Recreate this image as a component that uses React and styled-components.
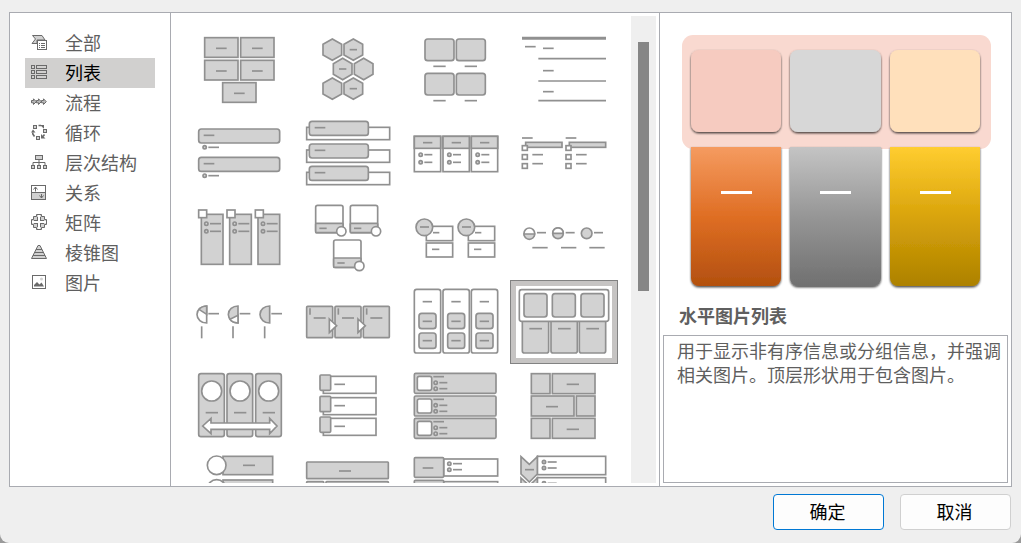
import React, { useState } from "react";
import styled, { createGlobalStyle } from "styled-components";

const GlobalStyle = createGlobalStyle`
  * { box-sizing: border-box; }
  body {
    margin: 0;
    background: #9a9a9a;
    font-family: "Noto Sans CJK SC", sans-serif;
    font-size: 18px;
    line-height: 24px;
    color: #5f5f5f;
  }
  button { font: inherit; color: inherit; }
`;

const Dialog = styled.div`
  display: flex;
  flex-direction: column;
  height: 100vh;
  padding: 12px 9px 13px;
  background: #efefef;
  border-radius: 0 0 9px 9px;
`;

const Panels = styled.main`
  display: flex;
  flex: 1;
  min-height: 0;
  background: #fff;
  border: 1px solid #a9abb1;
`;

const Categories = styled.nav`
  flex: none;
  width: 161px;
  padding: 15px;
  border-right: 1px solid #a9abb1;
`;

const Category = styled.button`
  display: flex;
  align-items: center;
  gap: 18px;
  width: 130px;
  height: 30px;
  padding: 0 6px 2px;
  border: 0;
  text-align: left;
  white-space: nowrap;
  background: ${(p) => (p.$active ? "#d1d0cf" : "transparent")};
  color: ${(p) => (p.$active ? "#000" : "#5f5f5f")};
`;

const CategoryIcon = styled.svg`
  flex: none;
  width: 16px;
  height: 18px;
  fill: none;
  stroke: #6a6a6a;
  stroke-width: 1;
`;

const Gallery = styled.section`
  display: flex;
  flex: 1;
  min-width: 0;
  padding: 3px;
  border-right: 1px solid #a9abb1;
`;

const Layouts = styled.div`
  flex: 1;
  display: grid;
  grid-template-columns: repeat(auto-fill, 108px);
  grid-auto-rows: 84px;
  align-content: start;
  padding: 12px 0 0 12px;
  overflow-y: auto;
  scrollbar-width: none;
`;

const LayoutButton = styled.button`
  display: block;
  padding: 5px;
  border: 1px solid ${(p) => (p.$active ? "#828282" : "transparent")};
  background: ${(p) => (p.$active ? "#c6c4c3" : "transparent")};
`;

const Picture = styled.svg`
  display: block;
  width: 96px;
  height: 72px;
  background: #fff;
  fill: #d2d2d2;
  stroke: #909090;
  stroke-width: 5;
`;

const Track = styled.div`
  flex: none;
  width: 25px;
  padding: 26px 7px;
  background: #efefef;
`;

const Thumb = styled.div`
  width: 11px;
  height: 60%;
  background: #868686;
`;

const Details = styled.section`
  display: flex;
  flex-direction: column;
  flex: none;
  width: 351px;
  padding: 3px;
`;

const Preview = styled.svg`
  flex: none;
  width: 312px;
  height: 256px;
  margin: 19px 0 0 19px;
`;

const Title = styled.h2`
  margin: 12px 16px 8px;
  font-size: 18px;
  line-height: 24px;
  font-weight: 700;
`;

const Description = styled.p`
  flex: 1;
  margin: 0;
  padding: 2px 4px 2px 13px;
  border: 1px solid #a9abb1;
`;

const Footer = styled.footer`
  display: flex;
  justify-content: flex-end;
  gap: 16px;
  padding: 7px 1px 0;
`;

const Action = styled.button`
  width: 111px;
  height: 36px;
  padding: 0 2px 2px 0;
  border: 1px solid ${(p) => (p.$primary ? "#0078d4" : "#d0d0d0")};
  border-radius: 4px;
  background: #fdfdfd;
  color: #000;
`;

/* Category icons, on a 16 unit grid */

const icons = {
  all: (
    <>
      <path d="M1.5 1.5H11L14 6H6V9.5H1L4.5 5Z" fill="#d1d1d1" />
      <rect x="6.5" y="6.5" width="9" height="9" fill="#fff" />
      <path d="M8 9.5h1M10 9.5h4M8 11.5h1M10 11.5h4M8 13.5h1M10 13.5h4" />
    </>
  ),
  list: (
    <>
      {[1, 6, 11].map((y) => (
        <g key={y}>
          <rect x="0.5" y={y + 0.5} width="3" height="3" />
          <rect x="5.5" y={y + 0.5} width="10" height="3" />
        </g>
      ))}
    </>
  ),
  process: (
    <>
      {[0, 5, 10].map((x) => (
        <path key={x} fill="#bbb" d={`M${x + 0.5} 6.5H${x + 2.5}V4.8L${x + 5.3} 7.7L${x + 2.5} 10.5V8.8H${x + 0.5}Z`} />
      ))}
    </>
  ),
  cycle: (
    <>
      <g fill="#d1d1d1">
        <rect x="2.5" y="1.5" width="3" height="3" />
        <rect x="12.5" y="5.5" width="3" height="3" />
        <rect x="5.5" y="12.5" width="3" height="3" />
      </g>
      <path d="M7.5 1.5H10M1.8 8.5V10L3.5 12.5M13.5 10.5L12 12.5" strokeWidth="1.6" />
      <path d="M0 8.5L2 5.5L4.5 8.5ZM9 1L13 1V4.8ZM10 10L14.5 14.5H10Z" fill="#6a6a6a" stroke="none" />
    </>
  ),
  hierarchy: (
    <>
      <path d="M8 6V11M2 11V8.5H14V11" />
      <g fill="#d1d1d1">
        <rect x="4.5" y="1.5" width="7" height="4" />
        <rect x="0.5" y="11.5" width="3" height="3" />
        <rect x="6.5" y="11.5" width="3" height="3" />
        <rect x="12.5" y="11.5" width="3" height="3" />
      </g>
    </>
  ),
  relation: (
    <>
      <rect x="0.5" y="8.5" width="14" height="7" fill="#d1d1d1" />
      <rect x="0.5" y="1.5" width="14" height="14" />
      <path d="M4.5 7.5V3M2.5 5.5L4.5 3L6.5 5.5M10.5 10V14M8.5 11.5L10.5 14L12.5 11.5" />
    </>
  ),
  matrix: (
    <>
      <path
        d="M5.5 0.5H10.5V2.5H13.5V5.5H15.5V10.5H13.5V13.5H10.5V15.5H5.5V13.5H2.5V10.5H0.5V5.5H2.5V2.5H5.5Z"
        fill="#d1d1d1"
      />
      <path d="M8 3V13M3 8H13" strokeWidth="4" />
      <path d="M8 1V15M1 8H15" stroke="#fff" strokeWidth="2" />
    </>
  ),
  pyramid: (
    <>
      <path d="M7 1.5H9L15.5 14.5H0.5Z" fill="#d1d1d1" />
      <path d="M5 5.5H11M4 8.5H12M2 11.5H14" />
    </>
  ),
  picture: (
    <>
      <rect x="1.5" y="1.5" width="13" height="13" />
      <path d="M3 12.5V11L6 8L8.5 10.5L10.5 8.5L13 12.5Z" fill="#6a6a6a" stroke="none" />
      <circle cx="10.5" cy="5" r="1.5" fill="#d1d1d1" stroke="none" />
    </>
  ),
};

const categories = [
  ["all", "全部"],
  ["list", "列表"],
  ["process", "流程"],
  ["cycle", "循环"],
  ["hierarchy", "层次结构"],
  ["relation", "关系"],
  ["matrix", "矩阵"],
  ["pyramid", "棱锥图"],
  ["picture", "图片"],
];

/* Parts of the layout drawings, on a 288 x 216 unit sheet */

const Box = ({ b: [x1, y1, x2, y2], r = 0, white }) => (
  <rect x={x1} y={y1} width={x2 - x1} height={y2 - y1} rx={r} fill={white ? "#fff" : undefined} />
);
const Dash = ({ x, y, w = 32 }) => <path d={`M${x} ${y}h${w}`} />;
const Ring = ({ x, y, r = 5, white }) => <circle cx={x} cy={y} r={r} fill={white ? "#fff" : undefined} />;
const Bullet = ({ x, y, w = 24 }) => (
  <>
    <Ring x={x} y={y} />
    <Dash x={x + 11} y={y} w={w} />
  </>
);
const Hexagon = ({ x, y, dash }) => (
  <>
    <path d={`M${x} ${y - 32}l28 16v32l-28 16l-28 -16v-32Z`} />
    {dash && <Dash x={x - 11} y={y} w={22} />}
  </>
);

const layouts = [
  {
    name: "基本列表", at: [36, 42],
    art: (
      <>
        {[[74, 53], [182, 53], [74, 121], [182, 121], [128, 188]].map(([x, y]) => (
          <g key={`${x}-${y}`}>
            <Box b={[x, y, x + 100, y + 59]} />
            <Dash x={x + 34} y={y + 32} />
          </g>
        ))}
      </>
    ),
  },
  {
    name: "交替六边形", at: [360, 42],
    art: (
      <>
        <Hexagon x={457} y={89} />
        <Hexagon x={520} y={89} dash />
        <Hexagon x={488} y={147} dash />
        <Hexagon x={551} y={147} />
        <Hexagon x={457} y={206} />
        <Hexagon x={520} y={206} dash />
      </>
    ),
  },
  {
    name: "图片题注列表", at: [24, 42],
    art: (
      <>
        {[[75, 57], [169, 57], [75, 160], [169, 160]].map(([x, y]) => (
          <g key={`${x}-${y}`}>
            <Box b={[x, y, x + 87, y + 65]} r={8} />
            <Dash x={x + 25} y={y + 82} w={37} />
          </g>
        ))}
      </>
    ),
  },
  {
    name: "线型列表", at: [348, 42],
    art: (
      <>
        <path d="M366 55H618" strokeWidth="9" />
        <Dash x={375} y={80} />
        {[[85, 116], [152, 183], [215, 242]].map(([y, line]) => (
          <g key={y}>
            <Dash x={429} y={y} />
            <Dash x={415} y={line} w={203} />
          </g>
        ))}
      </>
    ),
  },
  {
    name: "垂直项目符号列表", at: [36, 294],
    art: (
      <>
        {[327, 412].map((y) => (
          <g key={y}>
            <Box b={[56, y, 299, y + 42]} r={8} />
            <Dash x={71} y={y + 19} />
            <Bullet x={74} y={y + 55} w={32} />
          </g>
        ))}
      </>
    ),
  },
  {
    name: "垂直框列表", at: [360, 294],
    art: (
      <>
        {[304, 372, 439].map((y) => (
          <g key={y}>
            <Box b={[380, y + 18, 629, y + 55]} white />
            <Box b={[388, y, 565, y + 42]} r={8} />
            <Dash x={404} y={y + 19} />
          </g>
        ))}
      </>
    ),
  },
  {
    name: "水平项目符号列表", at: [24, 294],
    art: (
      <>
        {[43, 129, 214].map((x) => (
          <g key={x}>
            <Box b={[x, 349, x + 79, 455]} white />
            <Box b={[x, 349, x + 79, 385]} />
            <Dash x={x + 26} y={368} w={28} />
            <Bullet x={x + 19} y={404} />
            <Bullet x={x + 19} y={427} />
          </g>
        ))}
      </>
    ),
  },
  {
    name: "方形重点列表", at: [348, 294],
    art: (
      <>
        {[367, 498].map((x) => (
          <g key={x}>
            <Dash x={x - 1} y={354} />
            <Box b={[x + 10, 367, x + 119, 382]} />
            <Box b={[x, 377, x + 15, 391]} white />
            <Box b={[x, 404, x + 15, 418]} white />
            <Box b={[x, 431, x + 15, 445]} white />
            <Dash x={x + 30} y={404} />
            <Dash x={x + 30} y={431} />
          </g>
        ))}
      </>
    ),
  },
  {
    name: "图片重点列表", at: [36, 36],
    art: (
      <>
        {[56, 141, 226].map((x) => (
          <g key={x}>
            <Box b={[x + 8, 73, x + 73, 223]} />
            <Box b={[x, 60, x + 24, 83]} white />
            <Bullet x={x + 23} y={101} w={33} />
            <Bullet x={x + 23} y={124} w={33} />
          </g>
        ))}
      </>
    ),
  },
  {
    name: "蛇形图片题注", at: [360, 36],
    art: (
      <>
        {[[407, 46], [511, 46], [461, 150]].map(([x, y]) => (
          <g key={x}>
            <Box b={[x, y, x + 82, y + 82]} r={6} white />
            <Box b={[x, y + 54, x + 82, y + 82]} r={2} />
            <Dash x={x + 11} y={y + 69} w={22} />
            <Ring x={x + 77} y={y + 78} r={14} white />
          </g>
        ))}
      </>
    ),
  },
  {
    name: "堆叠列表", at: [24, 36],
    art: (
      <>
        {[47, 173].map((x) => (
          <g key={x}>
            <Box b={[x + 32, 109, x + 111, 152]} white />
            <Box b={[x + 32, 159, x + 111, 201]} white />
            <Ring x={x + 26} y={112} r={25} />
            <Dash x={x + 13} y={111} w={27} />
            <Dash x={x + 52} y={128} w={19} />
            <Dash x={x + 49} y={178} w={22} />
          </g>
        ))}
      </>
    ),
  },
  {
    name: "递增圆形流程", at: [348, 36],
    art: (
      <>
        <Ring x={388} y={130} r={16} white />
        <path d="M372 132H404A16 16 0 0 1 372 132Z" />
        <Ring x={474} y={130} r={16} />
        <path d="M459 130V124A16 16 0 0 1 489 124V130Z" fill="#fff" />
        <Ring x={560} y={130} r={16} />
        {[388, 474, 559].map((x) => (
          <g key={x}>
            <Dash x={x + 23} y={128} w={27} />
            <Dash x={x + 9} y={173} w={46} />
          </g>
        ))}
      </>
    ),
  },
  {
    name: "饼图流程", at: [36, 288],
    art: (
      <>
        <path d="M80 348V399A29 25.5 0 0 1 80 348Z" fill="#fff" />
        <path d="M80 348V373L57 358Q66 348 80 348Z" />
        <path d="M174 348V399A29 25.5 0 0 1 174 348Z" />
        <path d="M174 376V399Q158 399 150 388Z" fill="#fff" />
        <path d="M269 348V399A29 25.5 0 0 1 269 348Z" />
        {[65, 159, 254].map((x) => (
          <g key={x}>
            <path d={`M${x} 409V445`} />
            <Dash x={x + 20} y={371} />
          </g>
        ))}
      </>
    ),
  },
  {
    name: "详细流程", at: [360, 288],
    art: (
      <>
        {[380, 465, 550].map((x) => (
          <g key={x}>
            <Box b={[x, 349, x + 78, 443]} r={3} />
            <path d={`M${x + 10} 355V374`} />
            <Dash x={x + 21} y={384} w={36} />
          </g>
        ))}
        <path d="M448 387L470 407L448 428ZM534 387L556 407L534 428Z" fill="#fff" />
      </>
    ),
  },
  {
    name: "分组列表", at: [24, 288],
    art: (
      <>
        {[43, 129, 214].map((x) => (
          <g key={x}>
            <Box b={[x, 298, x + 79, 489]} r={7} white />
            <Dash x={x + 25} y={335} w={28} />
            <Box b={[x + 14, 370, x + 65, 416]} r={8} />
            <Dash x={x + 25} y={394} w={28} />
            <Box b={[x + 14, 429, x + 65, 475]} r={8} />
            <Dash x={x + 25} y={452} w={28} />
          </g>
        ))}
      </>
    ),
  },
  {
    name: "水平图片列表", at: [348, 288],
    art: (
      <>
        {[367, 453, 538].map((x) => (
          <g key={x}>
            <Box b={[x, 380, x + 79, 489]} r={6} />
            <Dash x={x + 21} y={416} w={38} />
          </g>
        ))}
        <Box b={[358, 299, 626, 394]} r={7} white />
        {[372, 457, 543].map((x) => (
          <Box key={x} b={[x, 311, x + 69, 381]} r={8} />
        ))}
      </>
    ),
  },
  {
    name: "连续图片列表", at: [36, 30],
    art: (
      <>
        {[56, 141, 227].map((x) => (
          <g key={x}>
            <Box b={[x, 41, x + 77, 230]} r={7} />
            <Ring x={x + 39} y={93} r={30} white />
            <Dash x={x + 21} y={158} w={37} />
          </g>
        ))}
        <path d="M68 198L93 175V189H269V175L291 198L269 221V208H93V221Z" fill="#fff" />
      </>
    ),
  },
  {
    name: "垂直图片重点列表", at: [360, 30],
    art: (
      <>
        {[45, 109, 171].map((y) => (
          <g key={y}>
            <Box b={[430, y + 4, 588, y + 55]} white />
            <Box b={[420, y, 452, y + 46]} r={3} />
            <Dash x={463} y={y + 28} />
          </g>
        ))}
      </>
    ),
  },
  {
    name: "垂直图片列表", at: [24, 30],
    art: (
      <>
        {[40, 108, 175].map((y) => (
          <g key={y}>
            <Box b={[43, y, 288, y + 60]} r={4} />
            <Box b={[52, y + 9, 95, y + 51]} r={6} white />
            <Dash x={100} y={y + 10} />
            <Bullet x={107} y={y + 28} />
            <Bullet x={107} y={y + 46} />
          </g>
        ))}
      </>
    ),
  },
  {
    name: "交替图片块", at: [348, 30],
    art: (
      <>
        <Box b={[394, 41, 450, 101]} />
        <Box b={[457, 41, 585, 101]} />
        <Dash x={500} y={73} w={37} />
        <Box b={[394, 108, 522, 168]} />
        <Box b={[529, 108, 585, 168]} />
        <Dash x={438} y={140} w={36} />
        <Box b={[394, 175, 450, 235]} />
        <Box b={[457, 175, 585, 235]} />
        <Dash x={500} y={208} w={37} />
      </>
    ),
  },
  {
    name: "垂直图片重点", at: [36, 282],
    art: (
      <>
        {[289, 360].map((y) => (
          <g key={y}>
            <Box b={[129, y, 278, y + 55]} />
            <Ring x={110} y={y + 27} r={28} white />
            <Dash x={189} y={y + 27} w={36} />
          </g>
        ))}
      </>
    ),
  },
  {
    name: "表格列表", at: [360, 282],
    art: (
      <>
        <Box b={[380, 306, 625, 356]} r={2} />
        <Dash x={477} y={333} w={36} />
        <Box b={[380, 365, 431, 480]} r={2} />
        <Box b={[438, 365, 625, 480]} r={2} />
      </>
    ),
  },
  {
    name: "垂直块列表", at: [24, 282],
    art: (
      <>
        {[293, 361].map((y) => (
          <g key={y}>
            <Box b={[131, y + 4, 293, y + 55]} white />
            <Box b={[43, y, 131, y + 59]} r={3} />
            <Dash x={68} y={y + 31} />
            <Bullet x={148} y={y + 18} w={27} />
            <Bullet x={148} y={y + 36} w={27} />
          </g>
        ))}
      </>
    ),
  },
  {
    name: "垂直 V 形列表", at: [348, 282],
    art: (
      <>
        {[288, 352].map((y) => (
          <g key={y}>
            <Box b={[412, y + 1, 617, y + 56]} white />
            <path d={`M363 ${y + 2}L388 ${y + 25}L412 ${y + 2}V${y + 54}L388 ${y + 78}L363 ${y + 54}Z`} />
            <Dash x={375} y={y + 41} w={27} />
            <Bullet x={432} y={y + 18} w={27} />
            <Bullet x={432} y={y + 36} w={27} />
          </g>
        ))}
      </>
    ),
  },
];

const columns = [
  { x: 9, w: 90, card: "#f6cbc0", stops: ["#f59b60", "#df6e24", "#b3500f"] },
  { x: 108, w: 91, card: "#d7d7d7", stops: ["#c4c4c4", "#969696", "#707070"] },
  { x: 208, w: 90, card: "#ffe0bb", stops: ["#ffcd30", "#d9a40b", "#ad8100"] },
];

const PreviewArt = () => (
  <Preview viewBox="0 0 312 256" role="img" aria-label="水平图片列表">
    <defs>
      <filter id="shade" x="-10%" y="-10%" width="120%" height="120%">
        <feDropShadow dx="0" dy="1.3" stdDeviation="0.9" floodColor="#000" floodOpacity="0.75" />
      </filter>
      {columns.map((c, i) => (
        <linearGradient key={i} id={`column${i}`} x1="0" y1="0" x2="0" y2="1">
          <stop offset="0" stopColor={c.stops[0]} />
          <stop offset="0.5" stopColor={c.stops[1]} />
          <stop offset="1" stopColor={c.stops[2]} />
        </linearGradient>
      ))}
    </defs>
    <rect width="309" height="114" rx="11" fill="#f9d9d0" />
    {columns.map((c, i) => (
      <g key={i}>
        <path
          d={`M${c.x} 112h${c.w}v131a8 8 0 0 1 -8 8h${16 - c.w}a8 8 0 0 1 -8 -8Z`}
          fill={`url(#column${i})`}
          filter="url(#shade)"
        />
        <rect x={c.x} y="15" width={c.w} height="82" rx="8" fill={c.card} filter="url(#shade)" />
        <rect x={c.x + 30} y="156" width="31" height="3" fill="#fff" />
      </g>
    ))}
    <path d="M99 110h9v2h-9ZM199 110h9v2h-9Z" fill="#f9d9d0" />
  </Preview>
);

export default function App() {
  const [category, setCategory] = useState("list");
  const [layout, setLayout] = useState("水平图片列表");

  return (
    <>
      <GlobalStyle />
      <Dialog role="dialog" aria-label="选择 SmartArt 图形">
        <Panels>
          <Categories>
            {categories.map(([id, label]) => (
              <Category key={id} type="button" $active={id === category} onClick={() => setCategory(id)}>
                <CategoryIcon viewBox="0 -1 16 18" aria-hidden="true">{icons[id]}</CategoryIcon>
                {label}
              </Category>
            ))}
          </Categories>
          <Gallery>
            <Layouts>
              {layouts.map(({ name, at, art }) => (
                <LayoutButton
                  key={name}
                  type="button"
                  aria-label={name}
                  $active={name === layout}
                  onClick={() => setLayout(name)}
                >
                  <Picture viewBox={`${at[0]} ${at[1]} 288 216`} aria-hidden="true">{art}</Picture>
                </LayoutButton>
              ))}
            </Layouts>
            <Track>
              <Thumb />
            </Track>
          </Gallery>
          <Details>
            <PreviewArt />
            <Title>水平图片列表</Title>
            <Description>用于显示非有序信息或分组信息，并强调相关图片。顶层形状用于包含图片。</Description>
          </Details>
        </Panels>
        <Footer>
          <Action type="button" $primary>确定</Action>
          <Action type="button">取消</Action>
        </Footer>
      </Dialog>
    </>
  );
}
